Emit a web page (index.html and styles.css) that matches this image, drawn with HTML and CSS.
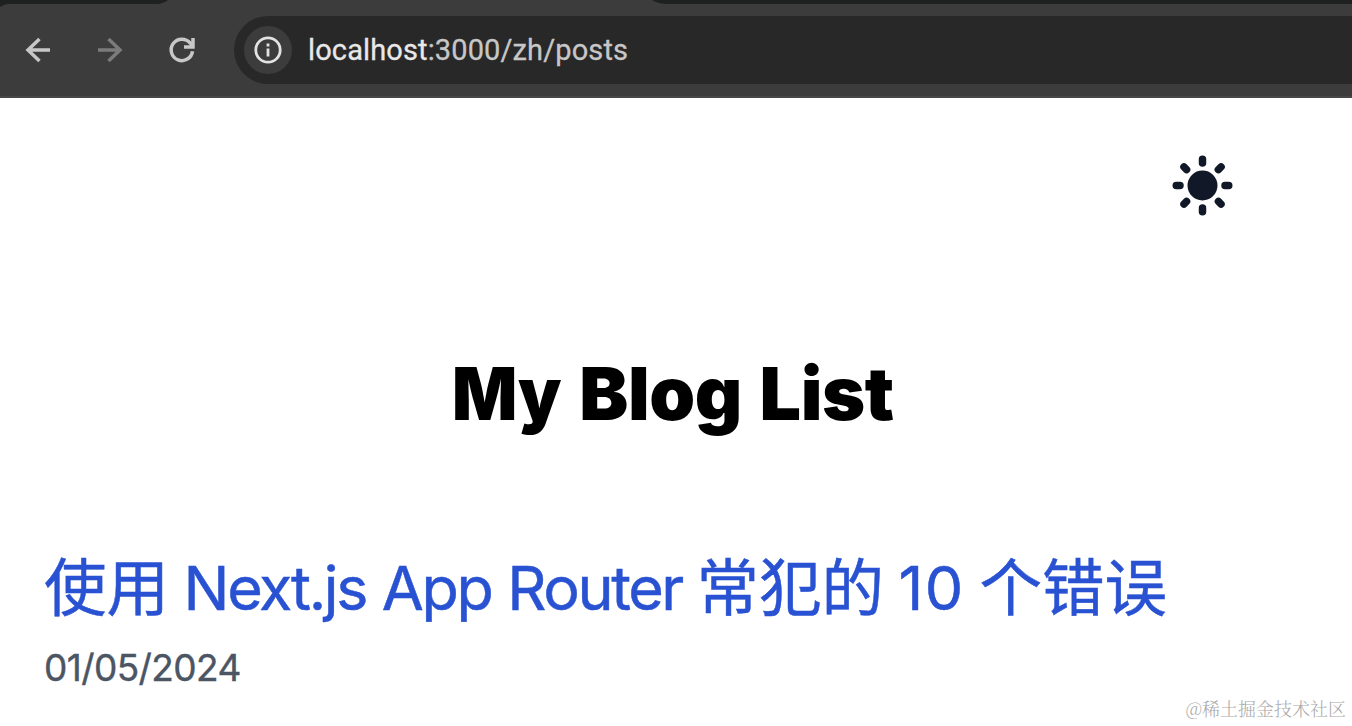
FILE: index.html
```html
<!DOCTYPE html>
<html lang="zh">
<head>
<meta charset="utf-8">
<title>My Blog List</title>
<link rel="stylesheet" href="styles.css">
</head>
<body>
<header class="browser">
  <div class="tabs">
    <svg width="1352" height="16" viewBox="0 0 1352 16"><path fill="#1f2020" d="M0 0H168C165 2.500 161 4 156 4H10Q4 4 0 7ZM652 0H1352V4H668C661 4 656 2.500 652 0Z"/></svg>
  </div>
  <div class="toolbar">
    <svg class="nav" viewBox="0 0 32 32"><path d="M28 16H6M17.500 5 6 16 17.500 27"/></svg>
    <svg class="nav nav-off" viewBox="0 0 32 32"><path d="M4 16H26M14.500 5 26 16 14.500 27"/></svg>
    <svg class="nav" viewBox="0 0 32 32"><path d="M26.500 17.200A10.700 10.700 0 1 1 24.200 9.200L26.800 11.800M18 13H27V4"/></svg>
    <div class="omnibox">
      <span class="info"><svg width="28" height="28" viewBox="0 0 28 28"><circle cx="14" cy="14" r="12.200"/><path d="M14 12.500V20.500M14 7.500V10.500"/></svg></span>
      <span class="url"><b>localhost</b>:3000/zh/posts</span>
    </div>
  </div>
</header>
<main class="page">
  <div class="theme">
    <svg width="75" height="75" viewBox="0 0 20 20"><path fill-rule="evenodd" d="M10 2a1 1 0 011 1v1a1 1 0 11-2 0V3a1 1 0 011-1zm4 8a4 4 0 11-8 0 4 4 0 018 0zm-.464 4.950l.707.707a1 1 0 001.414-1.414l-.707-.707a1 1 0 00-1.414 1.414zm2.120-10.607a1 1 0 010 1.414l-.706.707a1 1 0 11-1.414-1.414l.707-.707a1 1 0 011.414 0zM17 11a1 1 0 100-2h-1a1 1 0 100 2h1zm-7 4a1 1 0 011 1v1a1 1 0 11-2 0v-1a1 1 0 011-1zM5.050 6.464A1 1 0 106.465 5.050l-.708-.707a1 1 0 00-1.414 1.414l.707.707zm1.414 8.486l-.707.707a1 1 0 01-1.414-1.414l.707-.707a1 1 0 011.414 1.414zM4 11a1 1 0 100-2H3a1 1 0 000 2h1z"/></svg>
  </div>
  <h1 class="heading"><span class="tight">My</span> Blog List</h1>
  <article class="post">
    <a class="post-title">使用 <span class="latin">Next.js App Router</span> 常犯的 <span class="digits">10</span> 个错误</a>
    <time class="post-date">01/05/2024</time>
  </article>
</main>
<div class="watermark">@稀土掘金技术社区</div>
</body>
</html>
```
FILE: styles.css
```css
body {
  margin: 0;
  height: 726px;
  overflow: hidden;
  background: #fff;
  font-family: Inter, "Noto Sans CJK SC", sans-serif;
}
.browser {
  box-sizing: border-box;
  height: 98px;
  background: #3c3c3c;
  border-bottom: 2px solid #474747;
}
.tabs { height: 16px; }
.tabs svg { display: block; }
.toolbar {
  display: flex;
  align-items: center;
  height: 68px;
  padding-left: 22px;
}
.nav {
  width: 32px;
  height: 32px;
  margin-right: 40px;
  fill: none;
  stroke: #c7c7c7;
  stroke-width: 3.500;
}
.nav-off { stroke: #7b7b7b; }
.omnibox {
  display: flex;
  flex: 1;
  align-items: center;
  gap: 16px;
  height: 68px;
  margin-left: -4px;
  padding-left: 10px;
  border-radius: 34px 0 0 34px;
  background: #282828;
}
.info {
  display: flex;
  align-items: center;
  justify-content: center;
  width: 48px;
  height: 48px;
  border-radius: 50%;
  background: #3c3c3c;
}
.info svg {
  fill: none;
  stroke: #e3e3e3;
  stroke-width: 2.800;
}
.url {
  color: #c7c7c7;
  font: 29px/34px Roboto, sans-serif;
  letter-spacing: 0.12px;
  -webkit-text-stroke: 0.3px;
}
.url b {
  color: #e8e8e8;
  font-weight: 400;
}
.theme {
  display: flex;
  justify-content: flex-end;
  padding: 50px 112px 0 0;
}
.theme svg { fill: #111827; }
.heading {
  margin: 126px 0 0;
  padding-right: 6px;
  color: #000;
  font-size: 73.500px;
  font-weight: 900;
  line-height: 90px;
  letter-spacing: -0.450px;
  word-spacing: 3.500px;
  text-align: center;
}
.tight {
  display: inline-block;
  margin-right: -8px;
  transform: scaleX(0.93);
  transform-origin: left;
}
.post {
  display: flex;
  flex-direction: column;
  padding: 105px 0 0 44px;
}
.post-title {
  color: #2952d3;
  font-size: 62.500px;
  line-height: 88px;
  white-space: nowrap;
  word-spacing: -3px;
  -webkit-text-stroke: 0.5px;
}
.latin {
  font-size: 61px;
  letter-spacing: -0.039em;
  word-spacing: 1px;
  vertical-align: 1px;
}
.digits {
  font-size: 61px;
  letter-spacing: 1.500px;
  vertical-align: 1px;
}
.post-date {
  margin-top: 11px;
  color: #4b5563;
  font-size: 37px;
  line-height: 50px;
  letter-spacing: -0.600px;
  -webkit-text-stroke: 0.4px;
}
.watermark {
  position: absolute;
  right: 6px;
  bottom: 5px;
  color: #aaa;
  font: 300 18px/26px "Noto Serif CJK SC", "Noto Sans CJK SC", serif;
  white-space: nowrap;
}
```
